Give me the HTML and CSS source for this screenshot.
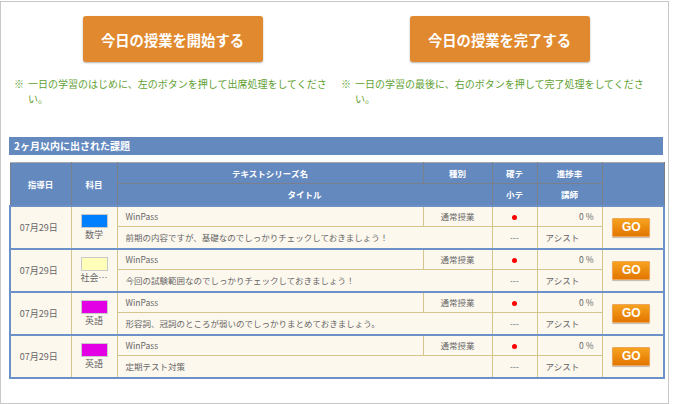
FILE: index.html
```html
<!DOCTYPE html>
<html lang="ja">
<head>
<meta charset="utf-8">
<title>課題</title>
<link rel="stylesheet" href="styles.css">
</head>
<body>
<div class="frame">
  <div class="content">
    <div class="actions">
      <div class="action">
        <button class="big-btn">今日の授業を開始する</button>
        <p class="note"><span class="mark">※</span><span class="note-text">一日の学習のはじめに、左のボタンを押して出席処理をしてください。</span></p>
      </div>
      <div class="action">
        <button class="big-btn">今日の授業を完了する</button>
        <p class="note"><span class="mark">※</span><span class="note-text">一日の学習の最後に、右のボタンを押して完了処理をしてください。</span></p>
      </div>
    </div>

    <h2 class="section-title">2ヶ月以内に出された課題</h2>

    <table class="tasks">
      <colgroup>
        <col class="c-date"><col class="c-subj"><col class="c-series"><col class="c-kind"><col class="c-test"><col class="c-rate"><col class="c-go">
      </colgroup>
      <thead>
        <tr class="h1">
          <th rowspan="2">指導日</th>
          <th rowspan="2">科目</th>
          <th>テキストシリーズ名</th>
          <th>種別</th>
          <th>確テ</th>
          <th>進捗率</th>
          <th rowspan="2"></th>
        </tr>
        <tr class="h2">
          <th colspan="2">タイトル</th>
          <th>小テ</th>
          <th>講師</th>
        </tr>
      </thead>
      <tbody class="rec">
        <tr class="r1">
          <td rowspan="2" class="date">07月29日</td>
          <td rowspan="2" class="subj"><span class="swatch sw-math"></span><span class="sname">数学</span></td>
          <td class="series">WinPass</td>
          <td class="kind">通常授業</td>
          <td class="dot"><span class="red-dot"></span></td>
          <td class="rate">0 %</td>
          <td rowspan="2" class="go"><button class="go-btn">GO</button></td>
        </tr>
        <tr class="r2">
          <td colspan="2" class="title">前期の内容ですが、基礎なのでしっかりチェックしておきましょう！</td>
          <td class="qt">---</td>
          <td class="teacher">アシスト</td>
        </tr>
      </tbody>
      <tbody class="rec">
        <tr class="r1">
          <td rowspan="2" class="date">07月29日</td>
          <td rowspan="2" class="subj"><span class="swatch sw-soc"></span><span class="sname">社会…</span></td>
          <td class="series">WinPass</td>
          <td class="kind">通常授業</td>
          <td class="dot"><span class="red-dot"></span></td>
          <td class="rate">0 %</td>
          <td rowspan="2" class="go"><button class="go-btn">GO</button></td>
        </tr>
        <tr class="r2">
          <td colspan="2" class="title">今回の試験範囲なのでしっかりチェックしておきましょう！</td>
          <td class="qt">---</td>
          <td class="teacher">アシスト</td>
        </tr>
      </tbody>
      <tbody class="rec">
        <tr class="r1">
          <td rowspan="2" class="date">07月29日</td>
          <td rowspan="2" class="subj"><span class="swatch sw-eng"></span><span class="sname">英語</span></td>
          <td class="series">WinPass</td>
          <td class="kind">通常授業</td>
          <td class="dot"><span class="red-dot"></span></td>
          <td class="rate">0 %</td>
          <td rowspan="2" class="go"><button class="go-btn">GO</button></td>
        </tr>
        <tr class="r2">
          <td colspan="2" class="title">形容詞、冠詞のところが弱いのでしっかりまとめておきましょう。</td>
          <td class="qt">---</td>
          <td class="teacher">アシスト</td>
        </tr>
      </tbody>
      <tbody class="rec">
        <tr class="r1">
          <td rowspan="2" class="date">07月29日</td>
          <td rowspan="2" class="subj"><span class="swatch sw-eng"></span><span class="sname">英語</span></td>
          <td class="series">WinPass</td>
          <td class="kind">通常授業</td>
          <td class="dot"><span class="red-dot"></span></td>
          <td class="rate">0 %</td>
          <td rowspan="2" class="go"><button class="go-btn">GO</button></td>
        </tr>
        <tr class="r2">
          <td colspan="2" class="title">定期テスト対策</td>
          <td class="qt">---</td>
          <td class="teacher">アシスト</td>
        </tr>
      </tbody>
    </table>
  </div>
</div>
</body>
</html>
```

FILE: styles.css
```css
* { box-sizing: border-box; }

html, body {
  margin: 0;
  padding: 0;
  background: #ffffff;
}

body {
  font-family: "Noto Sans CJK JP", "Noto Sans", sans-serif;
  color: #555;
}

.frame {
  margin-top: 1px;
  width: 669px;
  height: 403px;
  border: 1px solid #c8c8c8;
}

.content {
  padding: 14px 0 0 8px;
}

.actions {
  display: flex;
  width: 654px;
}

.action {
  width: 327px;
  display: flex;
  flex-direction: column;
  align-items: center;
}

.big-btn {
  width: 180px;
  height: 46px;
  border: none;
  border-radius: 3px;
  background: #e1892e;
  box-shadow: 0 1px 2px rgba(0, 0, 0, 0.3);
  color: #fff;
  font-family: "Noto Sans CJK JP", sans-serif;
  font-weight: bold;
  font-size: 14.3px;
  padding: 0;
  margin: 0;
}

.note {
  align-self: stretch;
  display: flex;
  margin: 14px 0 0 0;
  padding-left: 5px;
  font-size: 10px;
  line-height: 15px;
  color: #5f9f33;
}

.mark {
  flex: 0 0 14px;
}

.note-text {
  flex: 1;
}

.section-title {
  margin: 31px 0 0 0;
  width: 654px;
  height: 18px;
  background: #6389bf;
  color: #fff;
  font-size: 10px;
  font-weight: bold;
  line-height: 18px;
  padding-left: 5px;
}

.tasks {
  margin-top: 7px;
  width: 654px;
  border-collapse: collapse;
  table-layout: fixed;
  font-size: 8.5px;
}

.c-date { width: 61px; }
.c-subj { width: 46px; }
.c-series { width: 306px; }
.c-kind { width: 69px; }
.c-test { width: 45px; }
.c-rate { width: 65px; }
.c-go { width: 62px; }

.tasks thead th {
  background: #6389bf;
  color: #fff;
  font-weight: bold;
  border: 1px solid #7a7f8c;
  padding: 0;
  text-align: center;
}

.tasks thead tr.h1 th {
  border-top: 1px solid #a9a9a9;
  height: 21px;
}

.tasks thead tr.h2 th {
  height: 22px;
}

.tasks tbody.rec {
  border: 2px solid #6c91c9;
}

.tasks td {
  background: #fdf8ee;
  border: 1px solid #d3c58c;
  padding: 0 8px;
  height: 21px;
  color: #666;
  vertical-align: middle;
}

.tasks tr.r2 td {
  height: 22px;
}

.tasks td.date {
  text-align: center;
  padding: 0 4px 0 0;
  font-size: 9px;
}

.tasks td.subj {
  text-align: center;
  padding: 0;
}

.swatch {
  display: block;
  width: 27px;
  height: 14px;
  margin: 0 auto 1px;
  border: 1px solid #c9c9c9;
}

.sw-math { background: #0080ff; }
.sw-soc { background: #ffffba; }
.sw-eng { background: #e400e4; }

.sname {
  display: block;
  font-size: 9px;
  line-height: 12px;
}

.tasks td.kind,
.tasks td.qt,
.tasks td.dot {
  text-align: center;
  padding: 0;
}

.tasks td.rate {
  text-align: right;
}

.red-dot {
  display: inline-block;
  width: 5px;
  height: 5px;
  border-radius: 50%;
  background: #ff0000;
  vertical-align: middle;
}

.tasks td.go {
  text-align: center;
  padding: 0 3px 0 0;
}

.go-btn {
  width: 38px;
  height: 19px;
  padding: 0;
  border: 1px solid #eba65a;
  border-radius: 1px;
  background: linear-gradient(#f7a21f, #e27600);
  box-shadow: 0 1px 1px rgba(0, 0, 0, 0.25);
  color: #fff;
  font-family: "Liberation Sans", Arial, sans-serif;
  font-weight: bold;
  font-size: 12px;
  line-height: 17px;
}
```
